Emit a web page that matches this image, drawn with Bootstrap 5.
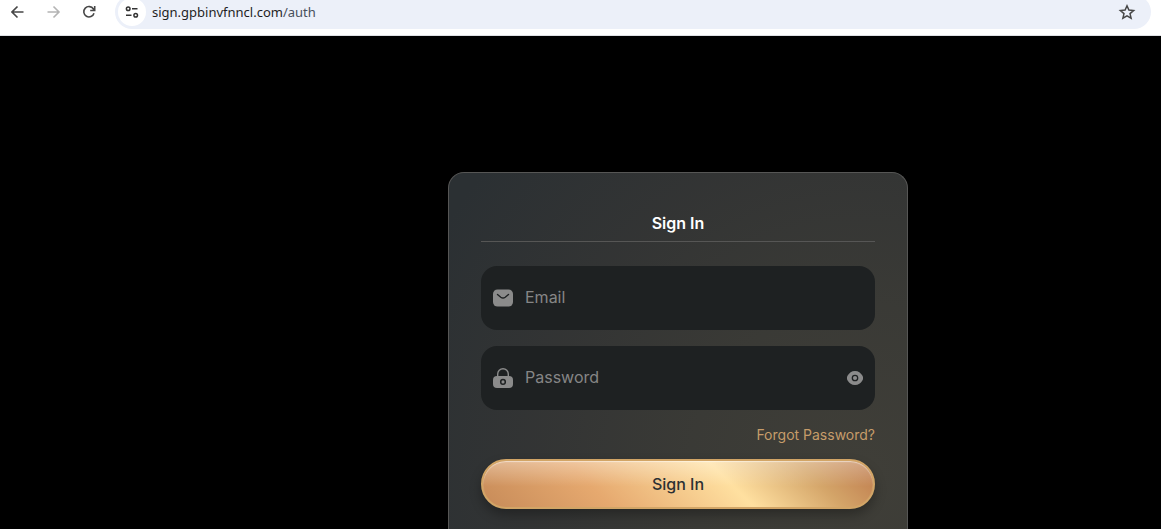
<!DOCTYPE html>
<html lang="en">
<head>
<meta charset="utf-8">
<meta name="viewport" content="width=device-width, initial-scale=1">
<title>Sign In</title>
<link href="https://cdn.jsdelivr.net/npm/bootstrap@5.3.0/dist/css/bootstrap.min.css" rel="stylesheet">
<style>
  body { background: #000; font-family: Inter, "Liberation Sans", sans-serif; }
  .toolbar { height: 36px; padding: 0 10px 6px 0; background: #fff; border-bottom: 1px solid #dfe1e5; overflow: hidden; }
  .tool-btn { width: 36px; height: 34px; color: #474747; background: none; border: 0; padding: 0; }
  .tool-btn:disabled { color: #b4b4b4; }
  .tool-group { width: 115px; padding-right: 8px; }
  .address { height: 34px; background: #ecf0f9; border-radius: 17px; padding: 0 14px 0 3px; }
  .site-info { width: 28px; height: 28px; border-radius: 50%; background: #fff; border: 0; padding: 0; color: #333; }
  .url { font: 13px/20px "Noto Sans", "Open Sans", sans-serif; color: #1f1f1f; margin-left: 6px; }
  .url span { color: #474f5c; }
  .stage { padding: 136px 0 0 195px; }
  .auth-card {
    width: 460px; padding: 32px 32px 16px; border: 1px solid #565655; border-bottom: 0; border-radius: 16px 16px 0 0;
    background:
      radial-gradient(circle at 90% 85%, rgba(67, 65, 57, .85) 0, rgba(64, 62, 55, .7) 35%, rgba(58, 56, 53, .5) 65%, transparent 95%),
      #2b3033;
  }
  .auth-title { font-size: 16px; line-height: 24px; font-weight: 600; color: #fff; padding: 6px 0; margin-bottom: 24px; border-bottom: 1px solid #565655; }
  .field { height: 64px; border-radius: 16px; background: #1e2122; padding: 0 12px; gap: 12px; margin-bottom: 16px; color: #8b8b8b; }
  .field input { background: none; border: 0; outline: 0; padding: 0 0 2px; color: #fff; font-size: 16px; line-height: 24px; min-width: 0; }
  .field input::placeholder { color: #868686; opacity: 1; }
  .eye-btn { width: 16px; height: 24px; color: inherit; }
  .forgot { font-size: 14px; line-height: 18px; color: #c69c6a; }
  .submit {
    height: 50px; margin-top: 15px; border: 2px solid #d2a566; border-radius: 25px; color: #2b3033;
    font-size: 16px; line-height: 24px; font-weight: 500;
    background:
      linear-gradient(rgba(255, 255, 255, .35), rgba(255, 255, 255, 0) 55%),
      linear-gradient(45deg, #c68a58 0, #e6a96f 30%, #ffe0a0 62%, #d4a569 82%, #c07e4f 97%);
    background-origin: border-box;
    box-shadow: inset 0 1px 1px rgba(255, 255, 255, .5), 0 6px 12px rgba(0, 0, 0, .3);
  }
</style>
</head>
<body class="d-flex flex-column min-vh-100">
<header class="toolbar d-flex align-items-end flex-shrink-0">
  <div class="tool-group d-flex flex-shrink-0">
    <button class="tool-btn d-flex align-items-center justify-content-center" type="button" aria-label="Back">
      <svg width="14" height="14" viewBox="0 0 14 14" fill="none" stroke="currentColor" stroke-width="1.6"><path d="M12.500 7H1.500M6.500 1.500 1 7l5.500 5.500"/></svg>
    </button>
    <button class="tool-btn d-flex align-items-center justify-content-center" type="button" aria-label="Forward" disabled>
      <svg width="14" height="14" viewBox="0 0 14 14" fill="none" stroke="currentColor" stroke-width="1.6"><path d="M.5 7h11M6.500 1.500 12 7l-5.500 5.500"/></svg>
    </button>
    <button class="tool-btn d-flex align-items-center justify-content-center" type="button" aria-label="Reload">
      <svg width="14" height="14" viewBox="0 0 14 14" fill="none" stroke="currentColor" stroke-width="1.6"><path d="M12 8.200A5.200 5.200 0 1 1 11.400 4L12.500 5.200M12.700 1v4.500H8.200"/></svg>
    </button>
  </div>
  <div class="address d-flex align-items-center flex-grow-1">
    <button class="site-info d-flex align-items-center justify-content-center flex-shrink-0" type="button" aria-label="Site information">
      <svg width="14" height="12" viewBox="0 0 14 12" fill="none" stroke="currentColor" stroke-width="1.500"><circle cx="3.200" cy="2.700" r="1.800"/><path d="M7 2.700h5.500M1 9.200h5.500"/><circle cx="10.700" cy="9.200" r="1.800"/></svg>
    </button>
    <a class="url text-decoration-none flex-grow-1" href="#">sign.gpbinvfnncl.com<span>/auth</span></a>
    <button class="btn p-0 border-0 d-flex" type="button" aria-label="Bookmark">
      <svg width="20" height="20" viewBox="0 0 20 20" fill="none" stroke="#474747" stroke-width="1.500"><path d="m10 3.800 1.900 4.300 4.700.4-3.600 3.100 1.100 4.600-4.100-2.400-4.100 2.400L7 11.600 3.400 8.500l4.700-.4z"/></svg>
    </button>
  </div>
</header>

<main class="stage d-flex justify-content-center align-items-stretch flex-grow-1">
  <form class="auth-card flex-shrink-0">
    <h1 class="auth-title text-center">Sign In</h1>
    <div class="field d-flex align-items-center">
      <label for="email" class="d-flex" aria-label="Email">
        <svg width="20" height="20" viewBox="0 0 20 20"><rect y="1.500" width="20" height="17" rx="4.500" fill="currentColor"/><path d="M4.500 6.500 7.800 9.200Q10 10.800 12.200 9.200L15.500 6.500" fill="none" stroke="#1e2122" stroke-width="1.400" stroke-linecap="round"/></svg>
      </label>
      <input id="email" type="email" class="flex-grow-1" placeholder="Email">
    </div>
    <div class="field d-flex align-items-center">
      <label for="password" class="d-flex" aria-label="Password">
        <svg width="20" height="20" viewBox="0 0 20 20"><path d="M4.700 9V6a5.300 5.300 0 0 1 10.600 0v3" fill="none" stroke="currentColor" stroke-width="1.400"/><rect y="8" width="20" height="12" rx="4" fill="currentColor"/><circle cx="10" cy="13.900" r="2.300" fill="none" stroke="#1e2122" stroke-width="1.500"/></svg>
      </label>
      <input id="password" type="password" class="flex-grow-1" placeholder="Password">
      <button class="eye-btn btn p-0 border-0 d-flex align-items-center" type="button" aria-label="Show password">
        <svg width="16" height="16" viewBox="0 0 16 16"><path d="M8 1C4.500 1 2.300 3 .8 5.300Q-1 8 .8 10.700C2.300 13 4.500 15 8 15s5.700-2 7.200-4.300Q17 8 15.200 5.300C13.700 3 11.500 1 8 1z" fill="currentColor"/><circle cx="8" cy="8" r="2.700" fill="none" stroke="#1e2122" stroke-width="1.300"/></svg>
      </button>
    </div>
    <div class="d-flex justify-content-end">
      <a class="forgot text-decoration-none" href="#">Forgot Password?</a>
    </div>
    <button class="submit w-100 d-flex align-items-center justify-content-center" type="submit">Sign In</button>
  </form>
</main>
<script src="https://cdn.jsdelivr.net/npm/bootstrap@5.3.0/dist/js/bootstrap.bundle.min.js"></script>
</body>
</html>
